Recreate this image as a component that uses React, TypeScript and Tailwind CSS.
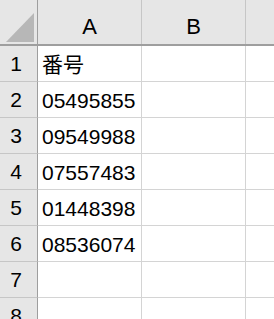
const COLS = ["A", "B"];

const ROWS: string[] = ["番号", "05495855", "09549988", "07557483", "01448398", "08536074", "", ""];

const font = { fontFamily: '"Liberation Sans", "Noto Sans CJK JP", sans-serif' };

export default function App() {
  return (
    <div className="w-[274px] h-[319px] overflow-hidden bg-white text-black" style={font}>
      {/* header */}
      <div className="flex h-[46px] bg-[#e6e6e6] border-b-2 border-[#9e9e9e]">
        <div className="w-[38px] shrink-0 border-r border-[#9e9e9e] flex items-end justify-end pr-[3px] pb-[2px]">
          <svg width="28" height="29" viewBox="0 0 28 29">
            <polygon points="28,0 28,29 0,29" fill="#b7b7b7" />
          </svg>
        </div>
        {COLS.map((c) => (
          <div
            key={c}
            className="w-[104px] shrink-0 border-r border-[#c6c6c6] flex items-end justify-center pb-[6px] text-[22px] leading-none"
          >
            {c}
          </div>
        ))}
        <div className="flex-1" />
      </div>

      {ROWS.map((v, i) => (
        <div key={i} className="flex h-[36px] border-b border-[#d4d4d4]">
          <div className="w-[38px] shrink-0 bg-[#e6e6e6] border-r border-[#9e9e9e] flex items-center justify-center pr-[5px] text-[21px] leading-none -mb-px border-b border-b-[#c6c6c6]">
            {i + 1}
          </div>
          <div className="w-[104px] shrink-0 border-r border-[#d4d4d4] flex items-center pl-[4px] pt-[2px] text-[21px] leading-none whitespace-nowrap">
            {v}
          </div>
          <div className="w-[104px] shrink-0 border-r border-[#d4d4d4]" />
          <div className="flex-1" />
        </div>
      ))}
    </div>
  );
}
